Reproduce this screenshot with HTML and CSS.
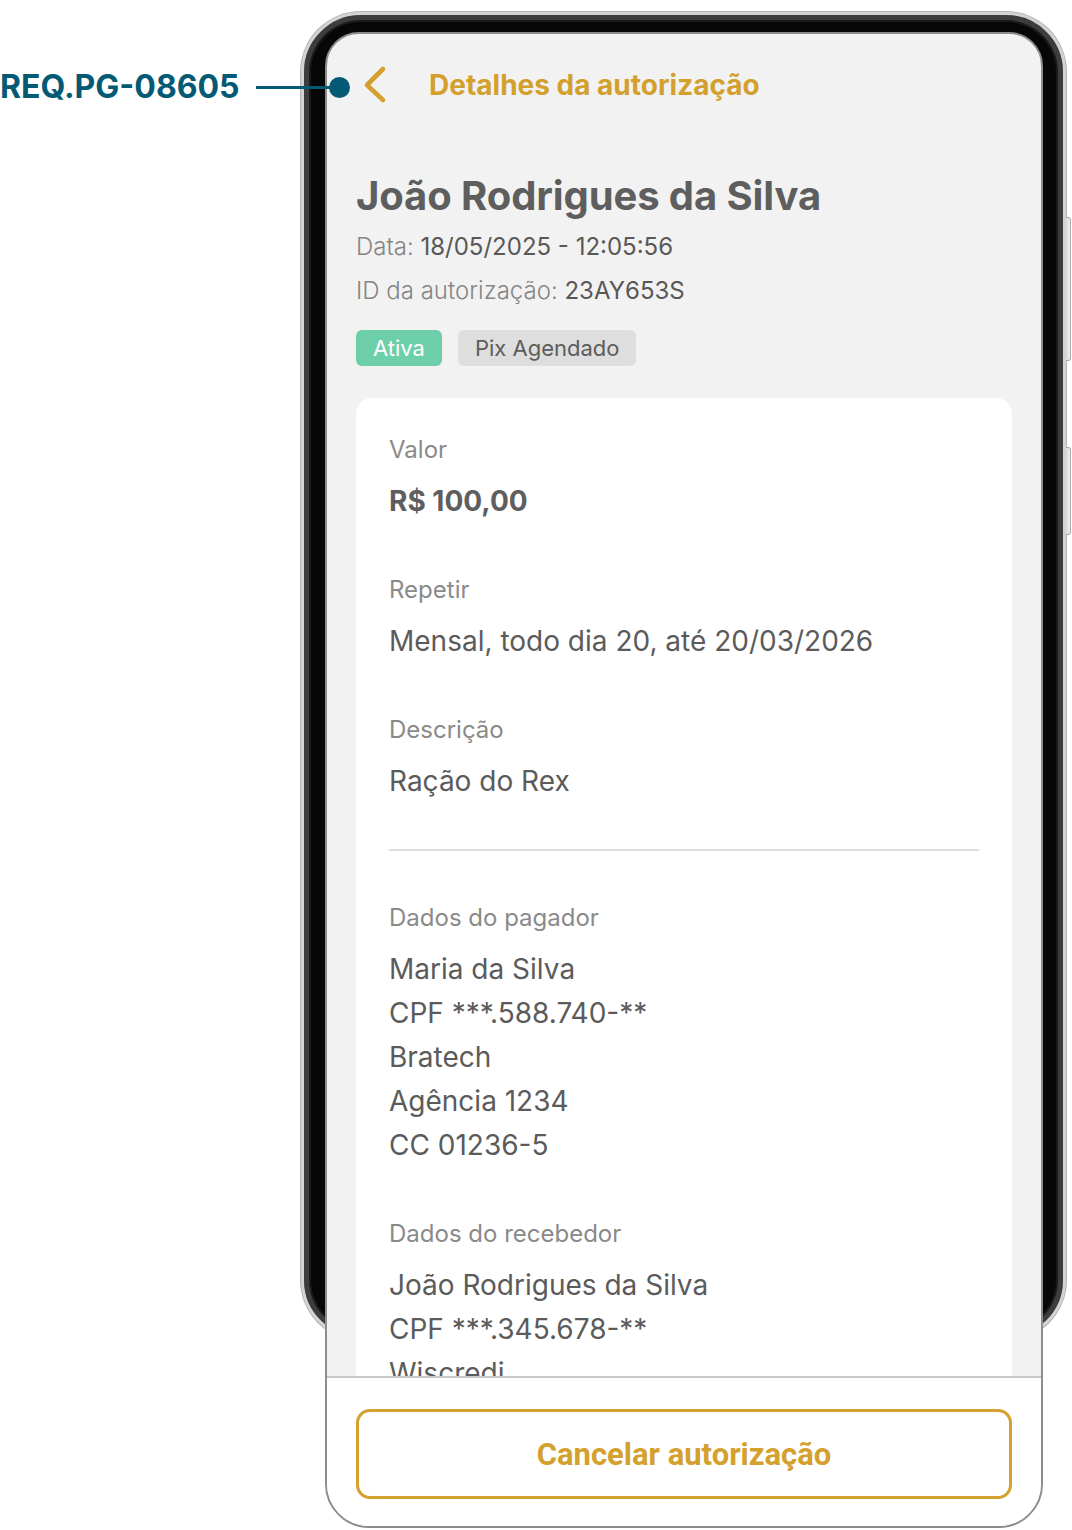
FILE: index.html
```html
<!DOCTYPE html>
<html lang="pt-BR">
<head>
<meta charset="utf-8">
<title>Detalhes da autorização</title>
<link rel="stylesheet" href="styles.css">
</head>
<body>
<div class="stage">
  <div class="phone">
    <span class="side-btn side-btn-a"></span>
    <span class="side-btn side-btn-b"></span>
  </div>

  <div class="annotation">
    <span class="req">REQ.PG-08605</span>
    <span class="leader"></span>
    <span class="dot"></span>
  </div>

  <main class="screen">
    <div class="scroll">
      <header class="topbar">
        <svg class="back" width="26" height="40" viewBox="0 0 26 40" aria-hidden="true">
          <path d="M21 4 L5 20 L21 35" fill="none" stroke="#d4a02e" stroke-width="4.6" stroke-linecap="round" stroke-linejoin="round"/>
        </svg>
        <h1 class="title">Detalhes da autorização</h1>
      </header>

      <h2 class="name">João Rodrigues da Silva</h2>
      <p class="meta"><span class="meta-key">Data:</span> 18/05/2025 - 12:05:56</p>
      <p class="meta"><span class="meta-key">ID da autorização:</span> 23AY653S</p>

      <div class="tags">
        <span class="tag tag-active">Ativa</span>
        <span class="tag tag-type">Pix Agendado</span>
      </div>

      <section class="card">
        <div class="field">
          <div class="label">Valor</div>
          <div class="lines"><div class="value value-strong">R$ 100,00</div></div>
        </div>
        <div class="field">
          <div class="label">Repetir</div>
          <div class="lines"><div class="value">Mensal, todo dia 20, até 20/03/2026</div></div>
        </div>
        <div class="field">
          <div class="label">Descrição</div>
          <div class="lines"><div class="value">Ração do Rex</div></div>
        </div>

        <hr class="divider">

        <div class="field">
          <div class="label">Dados do pagador</div>
          <div class="lines">
            <div class="value">Maria da Silva</div>
            <div class="value">CPF ***.588.740-**</div>
            <div class="value">Bratech</div>
            <div class="value">Agência 1234</div>
            <div class="value">CC 01236-5</div>
          </div>
        </div>
        <div class="field">
          <div class="label">Dados do recebedor</div>
          <div class="lines">
            <div class="value">João Rodrigues da Silva</div>
            <div class="value">CPF ***.345.678-**</div>
            <div class="value">Wiscredi</div>
          </div>
        </div>
      </section>
    </div>

    <footer class="actions">
      <button class="cancel" type="button">Cancelar autorização</button>
    </footer>
  </main>
</div>
</body>
</html>
```

FILE: styles.css
```css
* { box-sizing: border-box; }

html, body {
  margin: 0;
  padding: 0;
  background: #ffffff;
  overflow: hidden;
}

body {
  font-family: Inter, "Noto Sans", "Liberation Sans", sans-serif;
  color: #5b5b5b;
}

.stage {
  position: relative;
  width: 1072px;
  height: 1530px;
  padding-top: 32px;
  padding-left: 325px;
}

/* phone mockup frame (decorative, sits behind the screen) */
.phone {
  position: absolute;
  left: 301px;
  top: 12px;
  width: 765px;
  height: 1328px;
  border-radius: 60px;
  background: #070707;
  border: 3px solid #d3d3d3;
  box-shadow:
    0 0 0 1px #b4b4b4,
    inset 0 0 0 5px #3d3d3d,
    inset 0 0 0 7px #1a1a1a;
  z-index: 0;
}

.side-btn {
  position: absolute;
  right: -8px;
  width: 5px;
  background: linear-gradient(90deg, #d9d9d9, #f0f0f0);
  border: 1px solid #a9a9a9;
  border-left: none;
  border-radius: 0 3px 3px 0;
}
.side-btn-a { top: 202px; height: 144px; }
.side-btn-b { top: 432px; height: 88px; }

/* requirement annotation */
.annotation {
  position: absolute;
  left: 0;
  top: 67px;
  height: 40px;
  display: flex;
  align-items: center;
  z-index: 3;
}
.req {
  font-family: Inter, "Liberation Sans", sans-serif;
  font-weight: 700;
  font-size: 32px;
  line-height: 40px;
  color: #045a75;
}
.leader {
  width: 78px;
  height: 3px;
  margin-left: 16px;
  background: #045a75;
}
.dot {
  width: 21px;
  height: 21px;
  margin-left: -5px;
  border-radius: 50%;
  background: #045a75;
}

/* screen */
.screen {
  position: relative;
  z-index: 1;
  width: 718px;
  height: 1496px;
  border: 2px solid #8d8d8d;
  border-radius: 34px 34px 44px 44px;
  background: #f2f2f2;
  display: flex;
  flex-direction: column;
  overflow: hidden;
}

.scroll {
  flex: 1;
  min-height: 0;
  overflow: hidden;
  padding: 31px 29px 0;
}

.topbar {
  display: flex;
  align-items: center;
  height: 40px;
}
.back {
  display: block;
  margin-left: 6px;
  flex: none;
}
.title {
  margin: 0 0 0 41px;
  font-size: 28px;
  line-height: 40px;
  font-weight: 700;
  color: #d3a02e;
}

.name {
  margin: 62px 0 0;
  font-size: 40px;
  line-height: 58px;
  font-weight: 700;
  color: #5e5e5e;
  letter-spacing: -0.1px;
}

.meta {
  margin: 0;
  font-size: 24px;
  line-height: 44px;
  color: #585858;
}
.meta-key {
  font-weight: 300;
  color: #858585;
}

.tags {
  display: flex;
  gap: 16px;
  margin-top: 17px;
}
.tag {
  height: 36px;
  padding: 0 17px;
  border-radius: 6px;
  font-size: 22px;
  line-height: 36px;
}
.tag-active {
  background: #6dcfa9;
  color: #ffffff;
}
.tag-type {
  background: #dedede;
  color: #5c5c5c;
}

.card {
  margin-top: 32px;
  background: #ffffff;
  border-radius: 16px;
  padding: 37px 33px 60px;
}

.field + .field { margin-top: 52px; }

.label {
  font-size: 24px;
  line-height: 30px;
  color: #8a8a8a;
}
.lines { margin-top: 14px; }
.value {
  font-size: 28px;
  line-height: 44px;
  color: #5b5b5b;
}
.value-strong {
  font-size: 28px;
  font-weight: 700;
  color: #5e5e5e;
}

.divider {
  border: none;
  height: 2px;
  background: #dedede;
  margin: 46px 0 52px;
}

/* bottom action bar */
.actions {
  flex: none;
  height: 150px;
  background: #ffffff;
  border-top: 2px solid #c9c9c9;
  padding: 31px 29px 0;
}
.cancel {
  display: block;
  width: 100%;
  height: 90px;
  border: 3px solid #d4a02e;
  border-radius: 14px;
  background: #ffffff;
  font-family: Roboto, "Liberation Sans", sans-serif;
  font-weight: 700;
  font-size: 31px;
  color: #d4a02e;
  cursor: pointer;
}
```
